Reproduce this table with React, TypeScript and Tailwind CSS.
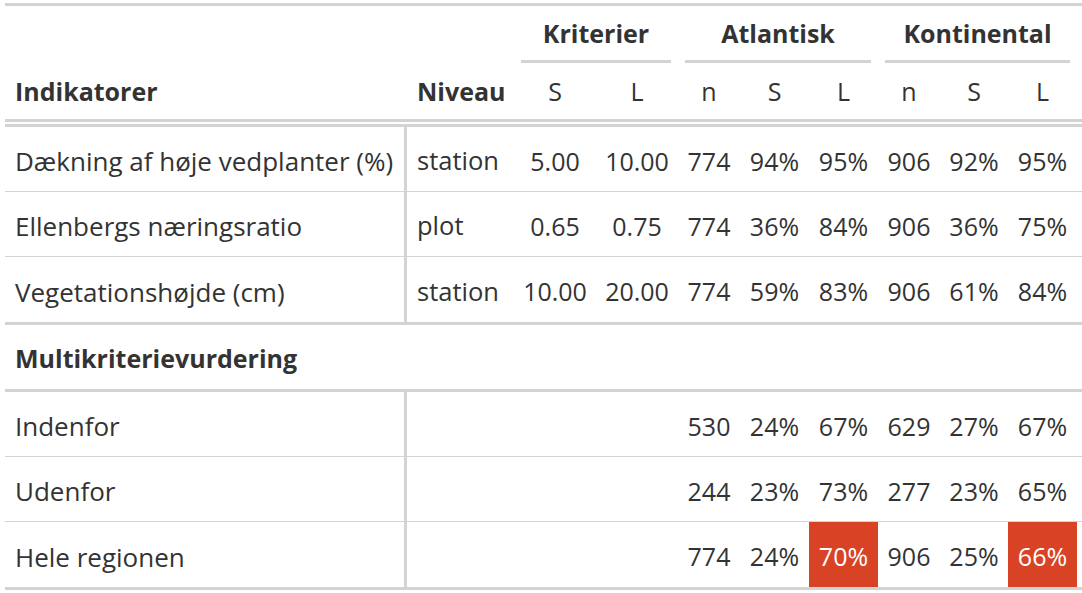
import React from "react";

const COLS =
  "grid grid-cols-[402px_107px_82px_82px_62px_69px_69px_62px_68px_69px_5px]";

type Row = {
  label: string;
  niveau: string;
  ks: string;
  kl: string;
  a: [string, string, string];
  c: [string, string, string];
  hiA?: boolean;
  hiC?: boolean;
};

const rows1: Row[] = [
  { label: "Dækning af høje vedplanter (%)", niveau: "station", ks: "5.00", kl: "10.00", a: ["774", "94%", "95%"], c: ["906", "92%", "95%"] },
  { label: "Ellenbergs næringsratio", niveau: "plot", ks: "0.65", kl: "0.75", a: ["774", "36%", "84%"], c: ["906", "36%", "75%"] },
  { label: "Vegetationshøjde (cm)", niveau: "station", ks: "10.00", kl: "20.00", a: ["774", "59%", "83%"], c: ["906", "61%", "84%"] },
];

const rows2: Row[] = [
  { label: "Indenfor", niveau: "", ks: "", kl: "", a: ["530", "24%", "67%"], c: ["629", "27%", "67%"] },
  { label: "Udenfor", niveau: "", ks: "", kl: "", a: ["244", "23%", "73%"], c: ["277", "23%", "65%"] },
  { label: "Hele regionen", niveau: "", ks: "", kl: "", a: ["774", "24%", "70%"], c: ["906", "25%", "66%"], hiA: true, hiC: true },
];

function Cell({ children, hi }: { children?: React.ReactNode; hi?: boolean }) {
  return (
    <div
      className={
        "flex items-center justify-center pt-[4px] text-[25px] " +
        (hi ? "bg-[#d84326] text-white" : "")
      }
    >
      {children}
    </div>
  );
}

function DataRow({ r, last }: { r: Row; last: boolean }) {
  return (
    <div
      className={
        COLS +
        " h-[65px] " +
        (last ? "" : "border-b border-[#d3d3d3]")
      }
    >
      <div className="flex items-center pl-[10px] pt-[4px] border-r-[3px] border-[#d3d3d3] whitespace-nowrap text-[26px]">
        {r.label}
      </div>
      <div className="flex items-center pl-[10px] pt-[4px] text-[25.5px]">{r.niveau}</div>
      <Cell>{r.ks}</Cell>
      <Cell>{r.kl}</Cell>
      <Cell>{r.a[0]}</Cell>
      <Cell>{r.a[1]}</Cell>
      <Cell hi={r.hiA}>{r.a[2]}</Cell>
      <Cell>{r.c[0]}</Cell>
      <Cell>{r.c[1]}</Cell>
      <Cell hi={r.hiC}>{r.c[2]}</Cell>
      <div />
    </div>
  );
}

export default function App() {
  return (
    <div
      className="bg-white w-[1082px] h-[593px] pt-[3px] pl-[5px] text-[#333333] text-[25px] leading-none"
      style={{ fontFamily: '"Open Sans", "Noto Sans", sans-serif' }}
    >
      <div className="border-t-[3px] border-[#d3d3d3]">
        {/* spanner row */}
        <div className={COLS + " h-[57px]"}>
          <div />
          <div />
          <div className="col-span-2 px-[7px] flex">
            <div className="flex-1 flex items-end justify-center border-b-[3px] border-[#d3d3d3] pb-[14px] font-bold">
              Kriterier
            </div>
          </div>
          <div className="col-span-3 px-[7px] flex">
            <div className="flex-1 flex items-end justify-center border-b-[3px] border-[#d3d3d3] pb-[14px] font-bold">
              Atlantisk
            </div>
          </div>
          <div className="col-span-3 px-[7px] flex">
            <div className="flex-1 flex items-end justify-center border-b-[3px] border-[#d3d3d3] pb-[14px] font-bold">
              Kontinental
            </div>
          </div>
          <div />
        </div>
        {/* column labels */}
        <div className={COLS + " h-[59px] border-b-[3px] border-[#d3d3d3]"}>
          <div className="flex items-center pl-[10px] pt-[1px] font-bold">Indikatorer</div>
          <div className="flex items-center pl-[10px] pt-[1px] font-bold">Niveau</div>
          <div className="flex items-center justify-center pt-[1px]">S</div>
          <div className="flex items-center justify-center pt-[1px]">L</div>
          <div className="flex items-center justify-center pt-[1px]">n</div>
          <div className="flex items-center justify-center pt-[1px]">S</div>
          <div className="flex items-center justify-center pt-[1px]">L</div>
          <div className="flex items-center justify-center pt-[1px]">n</div>
          <div className="flex items-center justify-center pt-[1px]">S</div>
          <div className="flex items-center justify-center pt-[1px]">L</div>
          <div />
        </div>
        <div className="h-[2px]" />
        {/* body */}
        <div className="border-t-[3px] border-b-[3px] border-[#d3d3d3]">
          {rows1.map((r, i) => (
            <DataRow key={r.label} r={r} last={i === rows1.length - 1} />
          ))}
        </div>
        <div className="h-[67px] flex items-center pl-[10px] pt-[3px] font-bold border-b-[3px] border-[#d3d3d3]">
          Multikriterievurdering
        </div>
        <div className="border-b-[3px] border-[#d3d3d3]">
          {rows2.map((r, i) => (
            <DataRow key={r.label} r={r} last={i === rows2.length - 1} />
          ))}
        </div>
      </div>
    </div>
  );
}
